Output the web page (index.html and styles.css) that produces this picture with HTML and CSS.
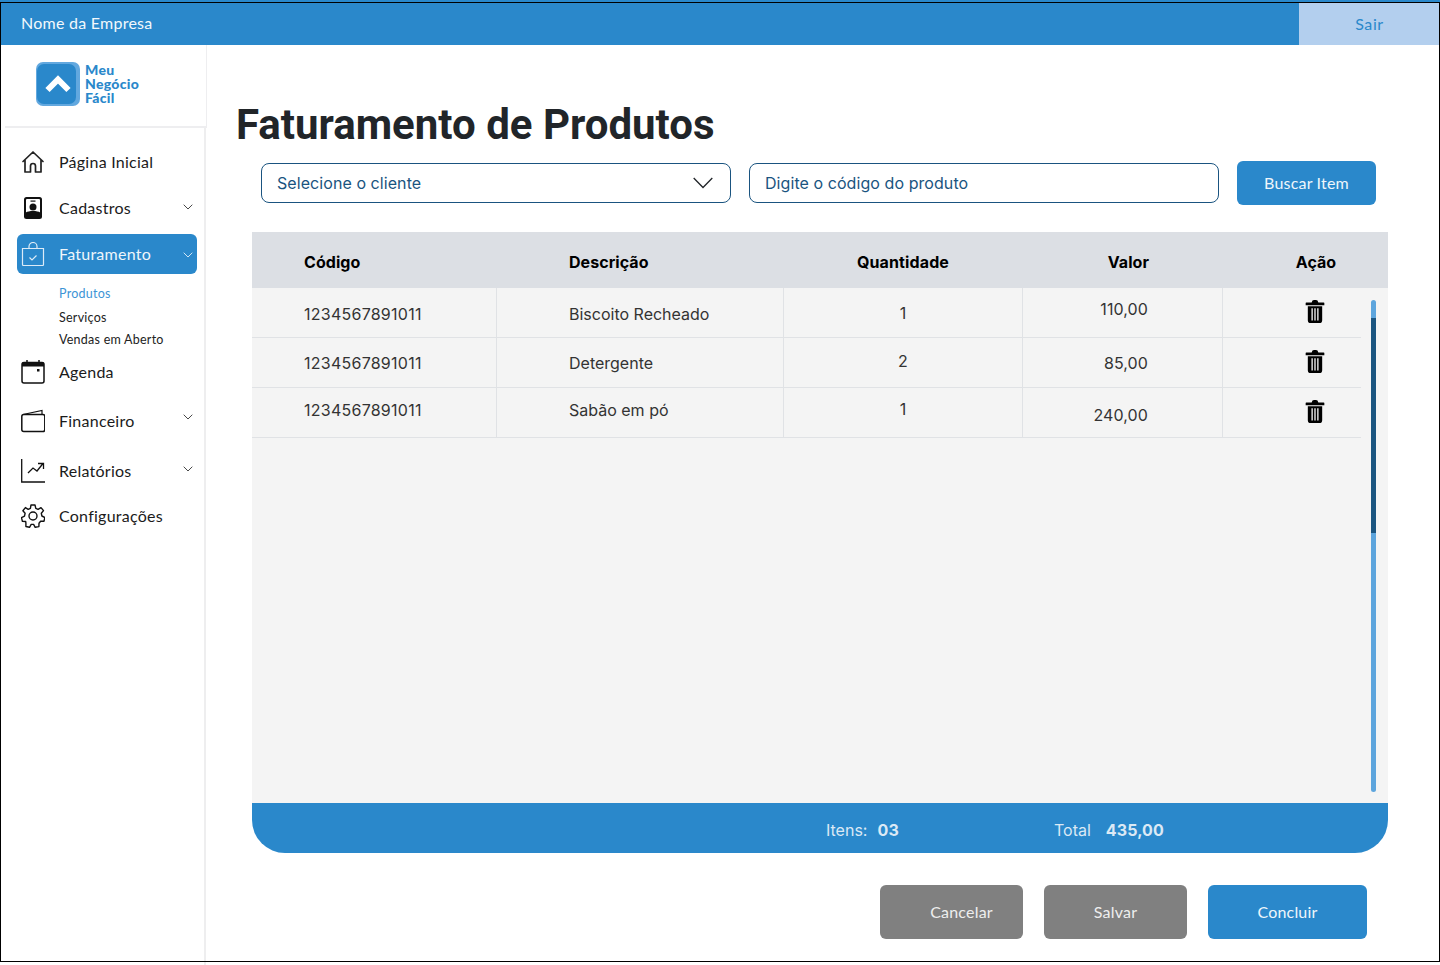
FILE: index.html
```html
<!DOCTYPE html>
<html lang="pt-BR">
<head>
<meta charset="utf-8">
<title>Faturamento de Produtos</title>
<link rel="stylesheet" href="styles.css">
</head>
<body>
<div class="app">
  <header class="topbar">
    <div class="company">Nome da Empresa</div>
    <a class="logout">Sair</a>
  </header>
  <div class="main">
    <aside class="sidebar">
      <div class="brand">
        <svg class="brand-mark" viewBox="0 0 44 44" width="44" height="44">
          <rect width="44" height="44" rx="7" fill="#62a8df"/>
          <rect x="1" y="2" width="39" height="40" rx="7" fill="#2a88cb"/>
          <path d="M11.500 28 22 17.500 32.500 28" fill="none" stroke="#fff" stroke-width="6"/>
        </svg>
        <div class="brand-name">Meu<br>Negócio<br>Fácil</div>
      </div>
      <nav class="nav">
        <a class="nav-item n-home">
          <svg class="ico" viewBox="0 0 24 24"><path d="M2 11.500 12 2l10 9.500M4 9.500V22h5.500v-6a2.500 2.500 0 0 1 5 0v6H20V9.500" fill="none" stroke="#222" stroke-width="1.700" stroke-linejoin="round" stroke-linecap="round"/></svg>
          <span class="nav-label">Página Inicial</span>
        </a>
        <a class="nav-item n-cad">
          <svg class="ico" viewBox="0 0 24 24"><rect x="3" y="1" width="18" height="22" rx="2.500" fill="#111"/><rect x="5" y="3" width="14" height="14" rx="1" fill="#fff"/><path d="M5 16.500c2-2 12-2 14 0v2H5z" fill="#111"/><rect x="9.500" y="4.500" width="5" height="1.200" fill="#111"/><circle cx="12" cy="11" r="3.500" fill="#111"/></svg>
          <span class="nav-label">Cadastros</span>
          <svg class="chev chev-cad" viewBox="0 0 10 6"><path d="M.7.7 5 5l4.300-4.300" fill="none" stroke="#333" stroke-width=".9"/></svg>
        </a>
        <a class="nav-item n-fat active">
          <svg class="ico" viewBox="0 0 24 24"><path d="M1.500 6.500h21v16a1 1 0 0 1-1 1h-19a1 1 0 0 1-1-1zM8 6.500V4.500a4 4 0 0 1 8 0v2M8.500 15.500l2.500 2.500 4.500-4.500" fill="none" stroke="#dcebf7" stroke-width="1.200"/></svg>
          <span class="nav-label">Faturamento</span>
          <svg class="chev chev-fat" viewBox="0 0 10 6"><path d="M.7.7 5 5l4.300-4.300" fill="none" stroke="#e3f0fa" stroke-width=".9"/></svg>
        </a>
        <div class="subnav">
          <a class="sub-item current">Produtos</a>
          <a class="sub-item">Serviços</a>
          <a class="sub-item">Vendas em Aberto</a>
        </div>
        <a class="nav-item n-age">
          <svg class="ico" viewBox="0 0 24 24"><rect x="1" y="2.500" width="22" height="20.500" rx="2" fill="none" stroke="#111" stroke-width="1.500"/><rect x="1" y="2.500" width="22" height="4" fill="#111"/><path d="M6 0v3M18 0v3" stroke="#111" stroke-width="1.500"/><rect x="16" y="9" width="2.500" height="2.500" fill="#111"/></svg>
          <span class="nav-label">Agenda</span>
        </a>
        <a class="nav-item n-fin">
          <svg class="ico" viewBox="0 0 24 24"><rect x=".8" y="5.500" width="23" height="17" rx="2" fill="none" stroke="#111" stroke-width="1.500"/><path d="M2 5.500 21 1.500v4" fill="none" stroke="#111" stroke-width="1.200"/></svg>
          <span class="nav-label">Financeiro</span>
          <svg class="chev chev-fin" viewBox="0 0 10 6"><path d="M.7.7 5 5l4.300-4.300" fill="none" stroke="#333" stroke-width=".9"/></svg>
        </a>
        <a class="nav-item n-rel">
          <svg class="ico" viewBox="0 0 24 24"><path d="M.7 0V23h23.300" fill="none" stroke="#111" stroke-width="1.300"/><path d="M7 14l5-5 4 3 6-7.500M17 4.500h5.500V10" fill="none" stroke="#111" stroke-width="1.300"/></svg>
          <span class="nav-label">Relatórios</span>
          <svg class="chev chev-rel" viewBox="0 0 10 6"><path d="M.7.7 5 5l4.300-4.300" fill="none" stroke="#333" stroke-width=".9"/></svg>
        </a>
        <a class="nav-item n-cfg">
          <svg class="ico" viewBox="0 0 24 24"><circle cx="12" cy="12" r="4" fill="none" stroke="#111" stroke-width="1.400"/><path d="M10 1h4l.8 3.300 2.300 1 2.900-1.700 2.500 3-2.200 2.700.6 2.700 3 1.500-.9 3.700-3.400.1-1.600 2-.1 3.300-3.700.7-1.600-2.900h-2.400l-1.700 2.900-3.600-.8v-3.300L4.700 17.500l-3.300-.2-.9-3.700 3-1.500.6-2.800-2.200-2.600L4.400 3.600l2.800 1.700 2.200-1z" fill="none" stroke="#111" stroke-width="1.400" stroke-linejoin="round"/></svg>
          <span class="nav-label">Configurações</span>
        </a>
      </nav>
    </aside>
    <main class="content">
      <h1 class="title">Faturamento de Produtos</h1>
      <div class="filters">
        <div class="field">
          <span>Selecione o cliente</span>
          <svg class="field-chev" viewBox="0 0 20 12"><path d="M.7 1 10 10.500 19.300 1" fill="none" stroke="#212529" stroke-width="1.300"/></svg>
        </div>
        <div class="field field-code"><span>Digite o código do produto</span></div>
        <button class="btn btn-search">Buscar Item</button>
      </div>
      <section class="table">
        <div class="thead">
          <div class="th c1">Código</div>
          <div class="th c2">Descrição</div>
          <div class="th c3">Quantidade</div>
          <div class="th c4">Valor</div>
          <div class="th c5">Ação</div>
        </div>
        <div class="tbody">
          <div class="rows">
            <div class="row">
              <div class="td c1 down1">1234567891011</div>
              <div class="td c2 down1">Biscoito Recheado</div>
              <div class="td c3">1</div>
              <div class="td c4 up4">110,00</div>
              <div class="td c5 up1"><svg class="trash" viewBox="0 0 20 24"><use href="#trash-shape"/></svg></div>
            </div>
            <div class="row">
              <div class="td c1">1234567891011</div>
              <div class="td c2">Detergente</div>
              <div class="td c3 up2">2</div>
              <div class="td c4">85,00</div>
              <div class="td c5 up1"><svg class="trash" viewBox="0 0 20 24"><use href="#trash-shape"/></svg></div>
            </div>
            <div class="row">
              <div class="td c1 up3">1234567891011</div>
              <div class="td c2 up3">Sabão em pó</div>
              <div class="td c3 up4">1</div>
              <div class="td c4 down2">240,00</div>
              <div class="td c5 up1"><svg class="trash" viewBox="0 0 20 24"><use href="#trash-shape"/></svg></div>
            </div>
          </div>
          <div class="scrolltrack"><div class="scrollthumb"></div></div>
        </div>
        <div class="tfoot">
          <span class="foot-label">Itens:</span><b class="foot-items">03</b>
          <span class="foot-label foot-total">Total</span><b class="foot-value">435,00</b>
        </div>
      </section>
      <div class="actions">
        <button class="btn btn-gray btn-cancel">Cancelar</button>
        <button class="btn btn-gray">Salvar</button>
        <button class="btn btn-done">Concluir</button>
      </div>
    </main>
  </div>
  <div class="frame"></div>
</div>
<svg class="defs" width="0" height="0">
  <symbol id="trash-shape" viewBox="0 0 20 24">
    <path d="M0 3.500Q0 2.500 1 2.500H6.500Q7 0 9 0h2q2 0 2.500 2.500H19q1 0 1 1V5.500H0z" fill="#000"/>
    <path d="M2.500 6.500H17.500V21q0 3-3 3H5.500q-3 0-3-3zM6.300 8.500V21.500H7.700V8.500zM9.300 8.500V21.500h1.400V8.500zM12.300 8.500V21.500h1.400V8.500z" fill="#000" fill-rule="evenodd"/>
  </symbol>
</svg>
</body>
</html>
```
FILE: styles.css
```css
* { box-sizing: border-box; }
html, body { margin: 0; padding: 0; background: #fff; }
body { font-family: "Lato", "Liberation Sans", sans-serif; overflow: hidden; }
.app { position: relative; width: 1440px; height: 965px; display: flex; flex-direction: column; }
.frame { position: absolute; left: 0; top: 2px; width: 1440px; height: 960px; border: 1px solid #000; pointer-events: none; }
.defs { position: absolute; }

.topbar { height: 45px; flex: none; display: flex; background: #2a88cb; }
.company { flex: 1; padding: 14px 0 0 21px; color: #f2f8fc; font-size: 16px; line-height: 18px; letter-spacing: .25px; }
.logout { width: 141px; margin-top: 3px; padding-top: 12px; text-align: center; background: #b3cfee; color: #2a88cb; font-size: 16px; line-height: 18px; letter-spacing: .6px; }

.main { flex: 1; display: flex; min-height: 0; }
.sidebar { width: 206px; flex: none; display: flex; flex-direction: column; }
.brand { height: 83px; width: 202px; flex: none; margin-left: 5px; padding: 17px 0 0 31px; display: flex; gap: 5px; border-bottom: 2px solid #eeeef0; border-right: 1px solid #eeeef0; }
.brand-mark { display: block; flex: none; }
.brand-name { color: #2a88cb; font-weight: 900; font-size: 14px; line-height: 14px; padding-top: 1px; letter-spacing: .3px; }

.nav { flex: 1; display: flex; flex-direction: column; border-right: 2px solid #eeeeef; }
.nav-item { position: relative; display: flex; align-items: center; height: 40px; margin-left: 17px; width: 180px; padding-left: 4px; color: #1b1b1b; font-size: 16px; }
.nav-label { margin-left: 14px; line-height: 18px; letter-spacing: .25px; }
.ico { width: 24px; height: 24px; flex: none; display: block; }
.chev { width: 10px; height: 6px; position: absolute; right: 4px; }
.chev-cad { top: 16px; }
.chev-fat { top: 18px; }
.chev-fin { top: 13px; }
.chev-rel { top: 15px; }
.n-home { margin-top: 14px; }
.n-cad { margin-top: 6px; }
.n-fat { margin-top: 6px; }
.active { background: #2a88cb; color: #eef6fb; border-radius: 6px; }
.subnav { display: flex; flex-direction: column; padding: 9px 0 0 59px; height: 78px; }
.sub-item { font-size: 12.500px; line-height: 22px; color: #222; height: 22px; letter-spacing: .25px; }
.sub-item.current { color: #3d94d6; height: 24px; }
.n-age { margin-top: 0; }
.n-fin { margin-top: 9px; }
.n-rel { margin-top: 10px; }
.n-cfg { margin-top: 5px; }

.content { flex: 1; min-width: 0; padding: 0 52px 0 30px; display: flex; flex-direction: column; }
.title { margin: 52px 0 0; font-family: "Roboto", sans-serif; font-weight: 700; font-size: 42px; line-height: 56px; color: #212529; }
.filters { display: flex; align-items: center; gap: 18px; margin: 8px 0 0 25px; height: 44px; }
.field { width: 470px; height: 40px; border: 1px solid #1a5480; border-radius: 8px; padding: 0 17px 0 15px; display: flex; align-items: center; justify-content: space-between; font-family: "Inter", sans-serif; font-size: 16px; letter-spacing: .07px; color: #1a5480; background: #fff; }
.field-chev { width: 20px; height: 12px; display: block; }
.btn { border: 0; border-radius: 6px; font-family: "Lato", sans-serif; font-size: 16px; color: #eef6fb; letter-spacing: .2px; padding: 0 0 2px; }
.btn-search { width: 139px; height: 44px; background: #2a88cb; }

.table { margin: 27px 0 0 16px; width: 1136px; height: 621px; display: flex; flex-direction: column; }
.thead { height: 56px; flex: none; display: grid; grid-template-columns: 245px 287px 239px 200px 138px; background: #dcdfe4; }
.th { font-family: "Inter", sans-serif; font-weight: 700; font-size: 16px; color: #000; line-height: 60px; letter-spacing: .05px; }
.th.c3 { letter-spacing: .12px; padding-right: 1px; }
.tbody { flex: 1; min-height: 0; background: #f4f4f4; display: flex; }
.rows { width: 1109px; flex: none; }
.row { display: grid; grid-template-columns: 245px 287px 239px 200px 138px; height: 50px; border-bottom: 1px solid #e0e2e5; }
.td { display: flex; align-items: center; font-family: "Inter", sans-serif; font-size: 16px; color: #333; border-right: 1px solid #e0e2e5; }
.td.c5 { border-right: 0; padding-left: 46px; }
.c1 { padding-left: 52px; }
.td.c1 { letter-spacing: .25px; }
.c2 { padding-left: 72px; }
.c3 { justify-content: center; text-align: center; }
.c4 { justify-content: flex-end; padding-right: 74px; }
.td.c4 { letter-spacing: .1px; }
.th.c4 { text-align: right; padding-right: 74px; }
.c5 { justify-content: center; padding-left: 48px; text-align: center; }
.down1 { padding-top: 2px; }
.down2 { padding-top: 4px; }
.up1 { padding-bottom: 2px; }
.up2 { padding-bottom: 4px; }
.up3 { padding-bottom: 6px; }
.up4 { padding-bottom: 8px; }
.trash { width: 20px; height: 23px; display: block; }
.scrolltrack { width: 5px; height: 492px; margin: 12px 0 0 10px; background: #5da5dd; border-radius: 3px; padding-top: 18px; }
.scrollthumb { height: 215px; background: #1b5580; }
.tfoot { height: 50px; flex: none; background: #2a88cb; border-radius: 0 0 33px 33px; display: flex; align-items: center; padding: 4px 0 0 574px; font-family: "Inter", sans-serif; font-size: 16px; color: #dbe9f5; }
.foot-items { margin-left: 10px; font-weight: 700; letter-spacing: .2px; }
.foot-total { margin-left: 155px; }
.foot-value { margin-left: 15px; font-weight: 700; letter-spacing: .1px; }

.actions { display: flex; gap: 21px; margin: 32px 0 0 644px; }
.actions .btn { width: 143px; height: 54px; }
.btn-gray { background: #808080; color: #eee; }
.actions .btn-cancel { padding-left: 20px; }
.actions .btn-done { width: 159px; background: #2a88cb; }
```
